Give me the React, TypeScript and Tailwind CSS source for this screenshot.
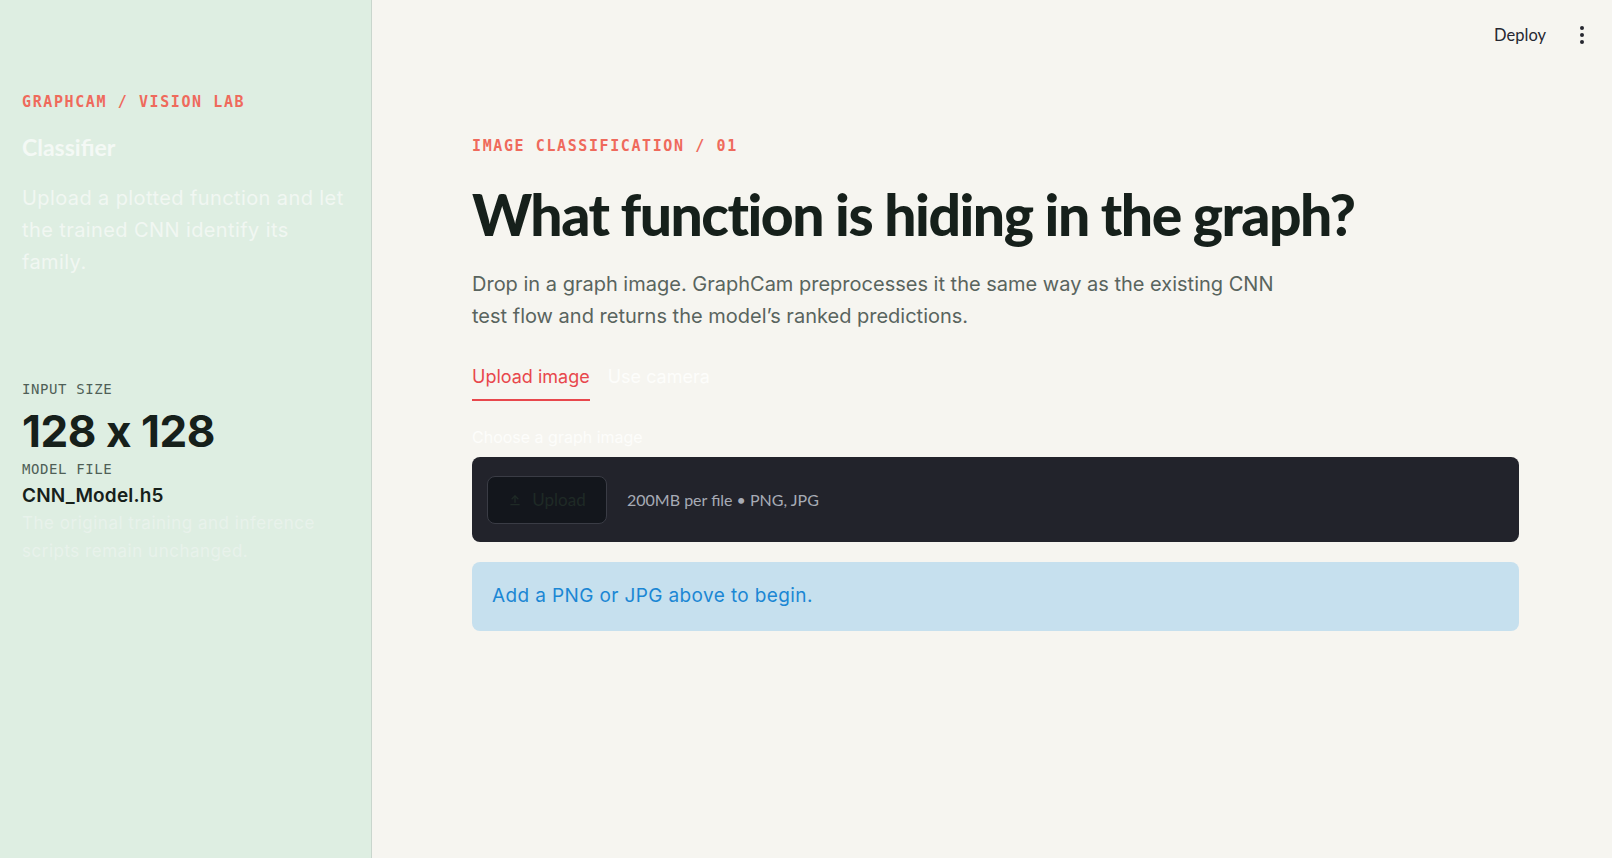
import React, { useState } from 'react';

const grotesk = { fontFamily: 'Inter, "Noto Sans", sans-serif' };

function UploadIcon() {
    return (
        <svg viewBox="0 0 24 24" className="h-[14px] w-[14px]" fill="none" stroke="currentColor" strokeWidth="2.4" strokeLinecap="round" strokeLinejoin="round">
            <path d="M12 16V5" />
            <path d="M7 10l5-5 5 5" />
            <path d="M5 20h14" />
        </svg>
    );
}

function Sidebar() {
    return (
        <aside className="w-[372px] shrink-0 h-full bg-[#deeee2] border-r border-[#c9d6cd] pl-[22px] pr-[24px] pt-[92px]">
            <div className="font-['DejaVu_Sans_Mono',monospace] text-[15px] leading-[20px] font-bold tracking-[1.6px] text-[#ef6a5c]">
                GRAPHCAM / VISION LAB
            </div>
            <h2 className="mt-[20px] font-['Lato',sans-serif] text-[23px] leading-[30px] font-bold text-[#f4f9f5]">
                Classifier
            </h2>
            <p className="mt-[20px] text-[20px] leading-[32px] tracking-[0.02em] text-[#f1f7f2]" style={grotesk}>
                Upload a plotted function and let the trained CNN identify its family.
            </p>

            <div className="mt-[101px] font-['DejaVu_Sans_Mono',monospace] text-[14px] leading-[20px] tracking-[0.6px] text-[#4f5f57]">
                INPUT SIZE
            </div>
            <div className="mt-[8px] text-[44px] leading-[48px] font-bold tracking-[-0.01em] text-[#16201b]" style={grotesk}>
                128 x 128
            </div>
            <div className="mt-[4px] font-['DejaVu_Sans_Mono',monospace] text-[14px] leading-[20px] tracking-[0.6px] text-[#4f5f57]">
                MODEL FILE
            </div>
            <div className="mt-[4px] text-[19px] leading-[26px] font-semibold tracking-[0.01em] text-[#16201b]" style={grotesk}>
                CNN_Model.h5
            </div>
            <p className="text-[17px] leading-[28px] tracking-[0.03em] text-[#e8f2eb]" style={grotesk}>
                The original training and inference scripts remain unchanged.
            </p>
        </aside>
    );
}

export default function App() {
    const [tab, setTab] = useState<'upload' | 'camera'>('upload');

    return (
        <div className="flex h-[858px] w-full overflow-hidden bg-[#f6f5f0]">
            <Sidebar />

            <main className="flex-1 flex flex-col">
                {/* Top bar */}
                <header className="h-[70px] flex items-center justify-end pr-[24px] gap-[30px] font-['Lato',sans-serif]">
                    <span className="text-[16.5px] text-[#262730]">Deploy</span>
                    <span className="flex flex-col items-center gap-[3px] w-[12px]">
                        <span className="w-[4px] h-[4px] rounded-full bg-[#262730]" />
                        <span className="w-[4px] h-[4px] rounded-full bg-[#262730]" />
                        <span className="w-[4px] h-[4px] rounded-full bg-[#262730]" />
                    </span>
                </header>

                <section className="pl-[100px] pr-[93px] pt-[66px]">
                    <div className="font-['DejaVu_Sans_Mono',monospace] text-[15px] leading-[20px] font-bold tracking-[1.6px] text-[#ef6a5c]">
                        IMAGE CLASSIFICATION / 01
                    </div>
                    <h1 className="mt-[22px] font-['Lato',sans-serif] text-[57px] leading-[72px] font-black tracking-[-0.026em] text-[#16201b]">
                        What function is hiding in the graph?
                    </h1>
                    <p className="mt-[18px] max-w-[820px] text-[20px] leading-[32px] text-[#59645e]" style={grotesk}>
                        Drop in a graph image. GraphCam preprocesses it the same way as the existing CNN test flow and returns the model’s ranked predictions.
                    </p>

                    {/* Tabs */}
                    <div className="mt-[33px] flex gap-[18px] text-[18px] leading-[24px]" style={grotesk}>
                        <button
                            type="button"
                            onClick={() => setTab('upload')}
                            className={`pb-[10px] border-b-2 ${tab === 'upload' ? 'border-[#e8474c] text-[#e8474c]' : 'border-transparent text-[#fdfdfb]'}`}
                        >
                            Upload image
                        </button>
                        <button
                            type="button"
                            onClick={() => setTab('camera')}
                            className={`pb-[10px] border-b-2 ${tab === 'camera' ? 'border-[#e8474c] text-[#e8474c]' : 'border-transparent text-[#fdfdfb]'}`}
                        >
                            Use camera
                        </button>
                    </div>

                    <label className="block mt-[26px] text-[16px] leading-[20px] text-[#fdfdfb]" style={grotesk}>
                        Choose a graph image
                    </label>

                    {/* Drop zone */}
                    <div className="mt-[10px] h-[85px] rounded-[8px] bg-[#22232b] flex items-center px-[15px] gap-[20px] font-['Lato',sans-serif]">
                        <button
                            type="button"
                            className="h-[48px] w-[120px] rounded-[8px] border border-[#3a3c45] bg-[#13161c] flex items-center justify-center gap-[10px] text-[17px] text-[#1f2a26]"
                        >
                            <UploadIcon />
                            Upload
                        </button>
                        <span className="text-[16px] text-[#a7abb5]">200MB per file • PNG, JPG</span>
                    </div>

                    {/* Status */}
                    <div className="mt-[20px] h-[69px] rounded-[8px] bg-[#c6e0ee] flex items-center px-[20px]">
                        <span className="text-[19px] tracking-[0.02em] text-[#1b87d4]" style={grotesk}>
                            Add a PNG or JPG above to begin.
                        </span>
                    </div>
                </section>
            </main>
        </div>
    );
}
